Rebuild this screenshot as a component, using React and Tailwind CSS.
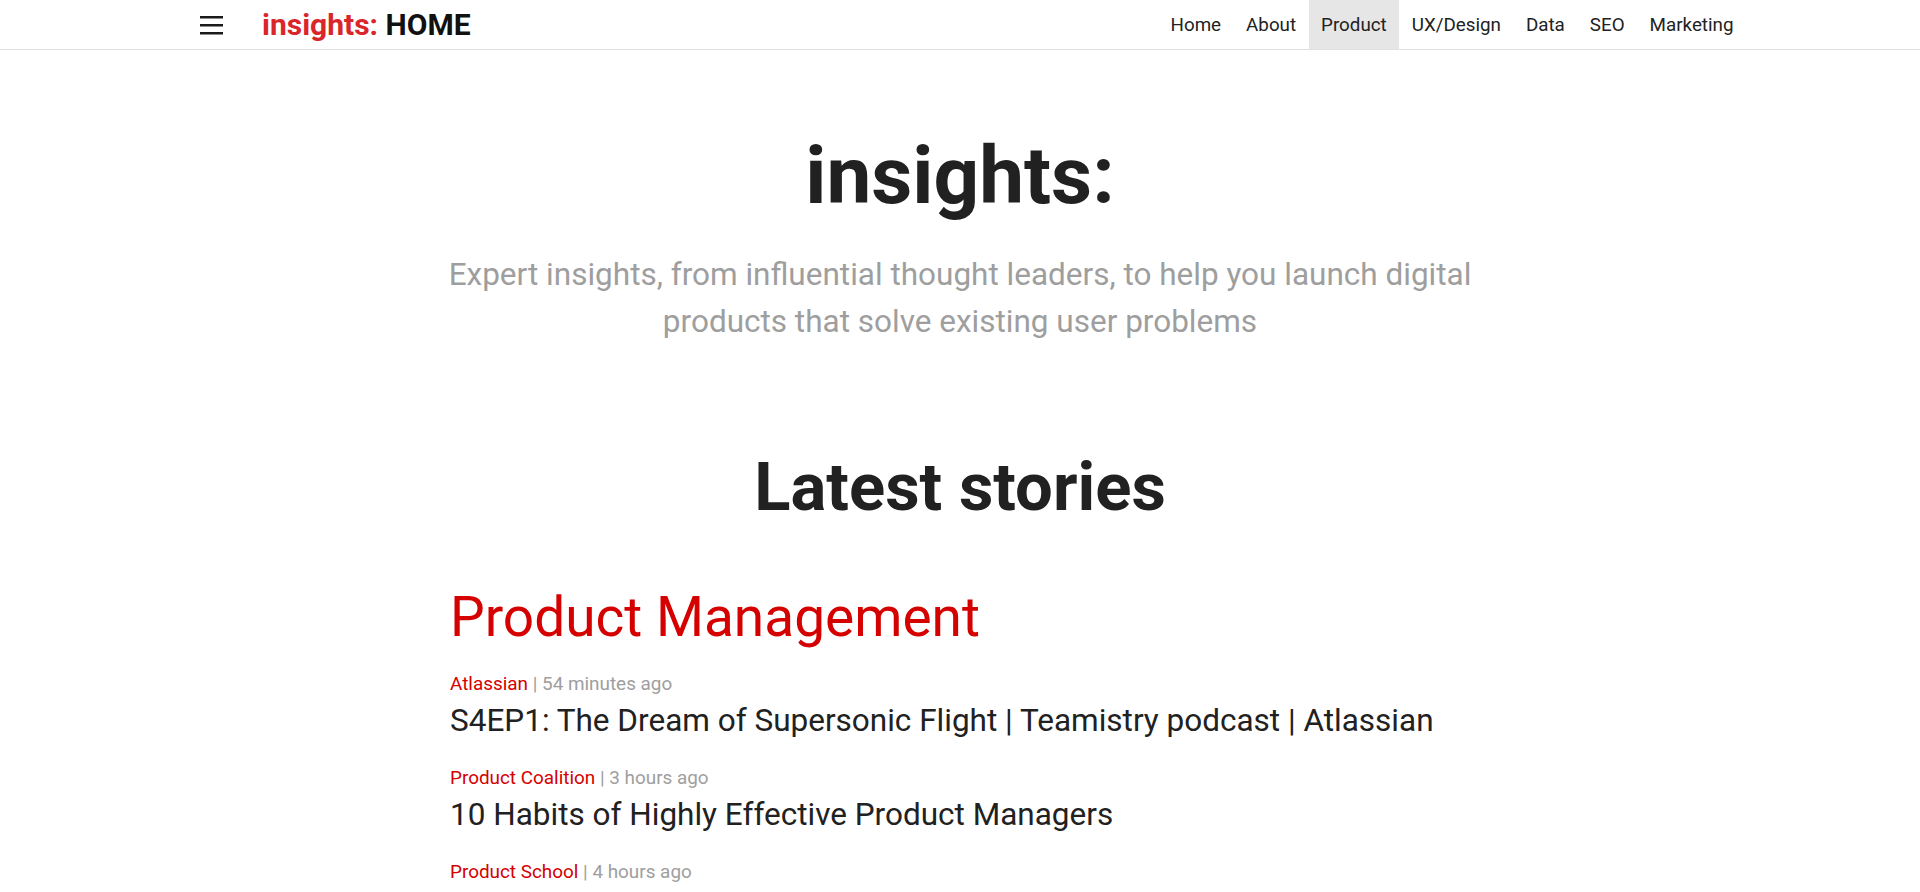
const navItems = ['Home', 'About', 'Product', 'UX/Design', 'Data', 'SEO', 'Marketing'];

const stories = [
  { source: 'Atlassian', age: '54 minutes ago', title: 'S4EP1: The Dream of Supersonic Flight | Teamistry podcast | Atlassian' },
  { source: 'Product Coalition', age: '3 hours ago', title: '10 Habits of Highly Effective Product Managers' },
  { source: 'Product School', age: '4 hours ago', title: 'How to Build a Product Roadmap That Actually Works' },
  { source: 'Mind the Product', age: '6 hours ago', title: 'Product Discovery Without the Guesswork' },
];

function MenuIcon() {
  return (
    <svg width="23" height="20" viewBox="0 0 23 20" className="text-[#1a1a1a]">
      <rect x="0" y="1" width="23" height="2.5" fill="currentColor" />
      <rect x="0" y="9" width="23" height="2.5" fill="currentColor" />
      <rect x="0" y="17" width="23" height="2.5" fill="currentColor" />
    </svg>
  );
}

export default function App() {
  return (
    <div className="min-h-screen bg-white font-['Roboto','Liberation_Sans',sans-serif] text-[#212121]">
      {/* Top bar */}
      <header className="h-[50px] border-b border-[#e0e0e0] flex items-center pl-[200px] pr-[174px]">
        <button className="flex items-center">
          <MenuIcon />
        </button>
        <a className="ml-[39px] text-[30px] font-bold leading-none">
          <span className="text-[#d9262a]">insights:</span>{' '}
          <span className="text-[#111]">HOME</span>
        </a>
        <nav className="ml-auto flex h-full">
          {navItems.map((item) => (
            <a
              key={item}
              className={`h-full flex items-center pt-[2px] px-[12.5px] text-[18.8px] text-[#222] ${item === 'Product' ? 'bg-[#e6e6e6]' : ''}`}
            >
              {item}
            </a>
          ))}
        </nav>
      </header>

      <main className="max-w-[1020px] mx-auto">
        {/* Hero */}
        <section className="text-center pt-[78px]">
          <h1 className="text-[80px] leading-[96px] font-bold text-[#212121]">insights:</h1>
          <p className="mt-[27px] -mx-5 text-[31.5px] leading-[47px] text-[#9e9e9e]">
            Expert insights, from influential thought leaders, to help you launch digital products that solve existing user problems
          </p>
        </section>

        {/* Stories */}
        <section className="mt-[102px]">
          <h2 className="text-center text-[67px] leading-[80px] font-bold text-[#212121]">Latest stories</h2>
          <h3 className="mt-[57px] text-[55px] leading-[67px] text-[#d50000]">Product Management</h3>
          <ul className="mt-[21px] space-y-[27px]">
            {stories.map((s, i) => (
              <li key={i}>
                <div className="text-[18.9px] leading-[24px]">
                  <span className="text-[#d50000]">{s.source}</span>
                  <span className="text-[#9e9e9e]"> | {s.age}</span>
                </div>
                <a className="block mt-[7px] text-[31.5px] leading-[36px] text-[#212121]">{s.title}</a>
              </li>
            ))}
          </ul>
        </section>
      </main>
    </div>
  );
}
